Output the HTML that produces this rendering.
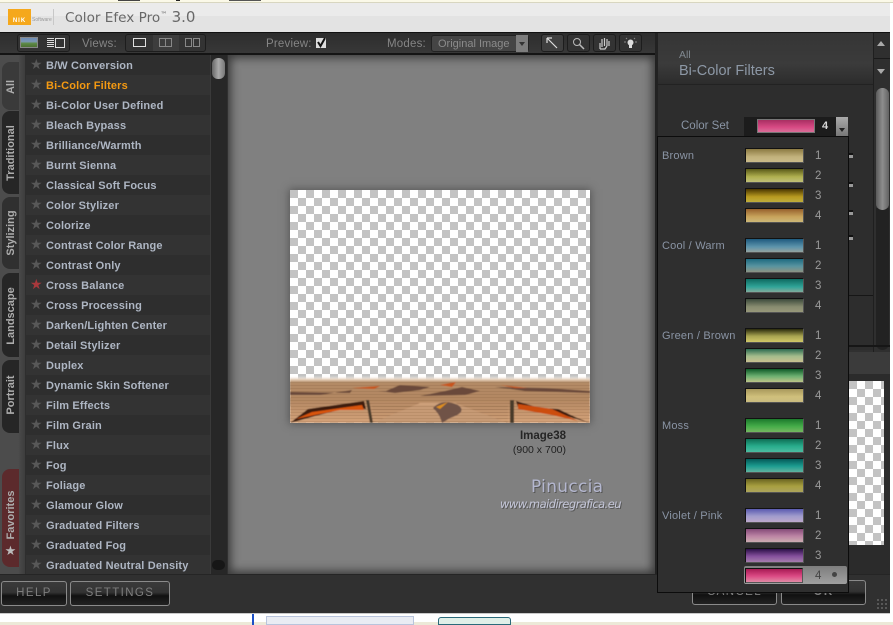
<!DOCTYPE html>
<html><head><meta charset="utf-8"><style>
html,body{margin:0;padding:0;width:893px;height:625px;overflow:hidden;background:#fff}
*{box-sizing:border-box}
body{position:relative;font-family:"Liberation Sans",sans-serif}
.a{position:absolute}
.r{position:absolute;left:26px;width:184px;height:20px;font:bold 11px/22px "Liberation Sans",sans-serif;color:#aeb6c3;padding-left:20px;white-space:nowrap;letter-spacing:.15px}
.r.o{background:#2e2e2e}.r.e{background:#333}
.r i{position:absolute;left:4px;top:0;font:normal 14px/21px "DejaVu Sans",sans-serif;color:#585858;letter-spacing:0}
.t{position:absolute;left:2px;width:17px;background:#262626;border-radius:8px 0 0 8px}
.t b{position:absolute;left:9px;transform:translate(-50%,-50%) rotate(-90deg);font:bold 11px "Liberation Sans",sans-serif;color:#adadad;white-space:nowrap}
.g{position:absolute;left:662px;margin-top:1px;font:11px/14px "Liberation Sans",sans-serif;color:#8a94a4;letter-spacing:.2px;white-space:nowrap}
.s{position:absolute;left:745px;width:59px;height:15px;border:1px solid #111;border-bottom-color:#555;border-right-color:#555}
.n{position:absolute;left:815px;margin-top:1px;font:11.5px/14px "Liberation Sans",sans-serif;color:#9a9a9a}
.btn{position:absolute;height:25px;border:1px solid #8a8a8a;border-radius:3px;background:linear-gradient(#3a3a3a 0,#333 45%,#111 60%,#222 100%);text-align:center;font:11.5px/23px "Liberation Sans",sans-serif;letter-spacing:1.4px;color:#7e7e7e}
.tb{position:absolute;top:34px;height:18px;background:#333;border:1px solid #1d1d1d;border-radius:3px}
.lb{position:absolute;margin-top:1px;font:11.5px/14px "Liberation Sans",sans-serif;color:#858585;white-space:nowrap;letter-spacing:.2px}
.m{position:absolute;left:849px;width:4px;height:5px;background:#999;border-top:2px solid #111}
</style></head><body>
<div class="a" style="left:0;top:0;width:893px;height:2px;background:#fbf9e8"></div>
<div class="a" style="left:118px;top:0;width:22px;height:1px;background:#444"></div>
<div class="a" style="left:176px;top:0;width:4px;height:1px;background:#222"></div>
<div class="a" style="left:229px;top:0;width:32px;height:1px;background:#555"></div>
<div class="a" style="left:0;top:2px;width:893px;height:1px;background:#d8d6c0"></div>
<div class="a" style="left:0;top:3px;width:890px;height:13px;background:#ebebeb"></div>
<div class="a" style="left:0;top:16px;width:890px;height:16px;background:#e3e3e3"></div>
<div class="a" style="left:890px;top:3px;width:3px;height:622px;background:#fff"></div>
<div class="a" style="left:8px;top:9px;width:23px;height:16px;background:#f5a81c"></div>
<div class="a" style="left:8px;top:18px;width:23px;font:bold 6px/6px 'Liberation Sans',sans-serif;color:#fff;text-align:center;letter-spacing:1px">NIK</div>
<div class="a" style="left:32px;top:17px;font:5px/6px 'Liberation Sans',sans-serif;color:#999">Software</div>
<div class="a" style="left:53px;top:9px;width:1px;height:16px;background:#c8c8c8"></div>
<div class="a" style="left:65px;top:8px;font:13.6px/18px 'DejaVu Sans',sans-serif;color:#686868;white-space:nowrap">Color Efex Pro<sup style="font-size:7px;line-height:0">™</sup> <span style="font-size:15px">3.0</span></div>

<div class="a" style="left:0;top:32px;width:890px;height:581px;background:#303030;border-top:1px solid #111"></div>
<div class="a" style="left:0;top:33px;width:660px;height:21px;background:linear-gradient(#2d2d2d,#383838)"></div>
<div class="a" style="left:0;top:53px;width:660px;height:2px;background:#141414"></div>

<div class="tb" style="left:17px;width:53px"></div>
<div class="a" style="left:20px;top:37px;width:18px;height:11px;border:1px solid #888;background:linear-gradient(#6d8bb3 0,#7c98b5 40%,#5d8a45 60%,#4d7035 100%)"></div>
<div class="a" style="left:47px;top:38px;width:7px;height:10px;background:repeating-linear-gradient(#ddd 0,#ddd 1px,transparent 1px,transparent 2px)"></div>
<div class="a" style="left:55px;top:38px;width:10px;height:10px;border:1px solid #ddd"></div>
<div class="lb" style="left:82px;top:36px">Views:</div>
<div class="tb" style="left:125px;width:81px"></div>
<div class="a" style="left:133px;top:38px;width:13px;height:9px;border:1px solid #e0e0e0"></div>
<div class="a" style="left:153px;top:35px;width:26px;height:16px;background:#3d3d3d"></div>
<div class="a" style="left:159px;top:38px;width:13px;height:9px;border:1px solid #888"></div>
<div class="a" style="left:165px;top:38px;width:1px;height:9px;background:#888"></div>
<div class="a" style="left:185px;top:38px;width:7px;height:9px;border:1px solid #888"></div>
<div class="a" style="left:193px;top:38px;width:7px;height:9px;border:1px solid #888"></div>

<div class="lb" style="left:266px;top:36px">Preview:</div>
<div class="a" style="left:316px;top:38px;width:10px;height:10px;background:#ddd"></div>
<svg class="a" style="left:315px;top:36px" width="13" height="13"><path d="M3 6 L5.5 10 L10 2" stroke="#111" stroke-width="2" fill="none"/></svg>
<div class="lb" style="left:387px;top:36px">Modes:</div>
<div class="a" style="left:431px;top:35px;width:98px;height:17px;background:#454545;border:1px solid #222;border-radius:3px;font:11px/16px 'Liberation Sans',sans-serif;color:#8b8b8b;padding-left:6px;white-space:nowrap">Original Image</div>
<div class="a" style="left:516px;top:35px;width:12px;height:17px;background:#7d7d7d"></div>
<div class="a" style="left:519px;top:42px;width:0;height:0;border:3px solid transparent;border-top:4px solid #333"></div>
<div class="tb" style="left:541px;width:23px;background:#3f3f3f"></div>
<svg class="a" style="left:545px;top:37px" width="15" height="13"><path d="M2 1 H7 M2 1 V6 M2 1 L12 11" stroke="#ddd" stroke-width="1.2" fill="none"/></svg>
<div class="tb" style="left:567px;width:23px"></div>
<svg class="a" style="left:571px;top:37px" width="15" height="13"><circle cx="6" cy="5" r="3.5" stroke="#bbb" fill="none"/><path d="M8.5 7.5 L13 12" stroke="#bbb" stroke-width="1.5"/></svg>
<div class="tb" style="left:593px;width:23px"></div>
<svg class="a" style="left:596px;top:36px" width="16" height="15"><path d="M4 13 V7 M6 11 V3 M8.5 10 V2 M11 10 V3 M13 10 V5 M4 13 H9 L11 10" stroke="#ccc" stroke-width="1.2" fill="none"/></svg>
<div class="tb" style="left:619px;width:23px"></div>
<svg class="a" style="left:622px;top:36px" width="17" height="15"><circle cx="8.5" cy="6.5" r="3" fill="#ddd"/><rect x="7" y="9" width="3" height="3" fill="#ddd"/><path d="M2 6 H4 M13 6 H15 M4 2 L5 3 M13 2 L12 3" stroke="#888"/></svg>

<!-- left tabs -->
<div class="a" style="left:0;top:55px;width:26px;height:519px;background:linear-gradient(90deg,#4c4c4c 0,#4c4c4c 70%,#3a3a3a 100%)"></div>
<div class="t" style="top:62px;height:48px;background:#3a3a3a"><b style="top:25px">All</b></div>
<div class="t" style="top:111px;height:83px"><b style="top:42px">Traditional</b></div>
<div class="t" style="top:197px;height:72px;background:#303030"><b style="top:36px">Stylizing</b></div>
<div class="t" style="top:273px;height:84px"><b style="top:43px">Landscape</b></div>
<div class="t" style="top:360px;height:73px"><b style="top:35px">Portrait</b></div>
<div class="t" style="top:469px;height:98px;background:#5c2a2c"><b style="top:46px">Favorites</b></div>
<div class="a" style="left:2px;top:543px;width:17px;text-align:center;font:13px/18px 'DejaVu Sans',sans-serif;color:#bbb">★</div>

<!-- list -->
<div class="a" style="left:25px;top:55px;width:186px;height:519px;background:#2e2e2e"></div>
<div class="r o" style="top:55px"><i>★</i>B/W Conversion</div>
<div class="r e" style="top:75px;color:#f59a12"><i>★</i>Bi-Color Filters</div>
<div class="r o" style="top:95px"><i>★</i>Bi-Color User Defined</div>
<div class="r e" style="top:115px"><i>★</i>Bleach Bypass</div>
<div class="r o" style="top:135px"><i>★</i>Brilliance/Warmth</div>
<div class="r e" style="top:155px"><i>★</i>Burnt Sienna</div>
<div class="r o" style="top:175px"><i>★</i>Classical Soft Focus</div>
<div class="r e" style="top:195px"><i>★</i>Color Stylizer</div>
<div class="r o" style="top:215px"><i>★</i>Colorize</div>
<div class="r e" style="top:235px"><i>★</i>Contrast Color Range</div>
<div class="r o" style="top:255px"><i>★</i>Contrast Only</div>
<div class="r e" style="top:275px"><i style="color:#a8383c">★</i>Cross Balance</div>
<div class="r o" style="top:295px"><i>★</i>Cross Processing</div>
<div class="r e" style="top:315px"><i>★</i>Darken/Lighten Center</div>
<div class="r o" style="top:335px"><i>★</i>Detail Stylizer</div>
<div class="r e" style="top:355px"><i>★</i>Duplex</div>
<div class="r o" style="top:375px"><i>★</i>Dynamic Skin Softener</div>
<div class="r e" style="top:395px"><i>★</i>Film Effects</div>
<div class="r o" style="top:415px"><i>★</i>Film Grain</div>
<div class="r e" style="top:435px"><i>★</i>Flux</div>
<div class="r o" style="top:455px"><i>★</i>Fog</div>
<div class="r e" style="top:475px"><i>★</i>Foliage</div>
<div class="r o" style="top:495px"><i>★</i>Glamour Glow</div>
<div class="r e" style="top:515px"><i>★</i>Graduated Filters</div>
<div class="r o" style="top:535px"><i>★</i>Graduated Fog</div>
<div class="r e" style="top:555px;height:19px"><i>★</i>Graduated Neutral Density</div>

<!-- list scrollbar -->
<div class="a" style="left:210px;top:55px;width:17px;height:519px;background:#272727;border-left:1px solid #3a3a3a"></div>
<div class="a" style="left:212px;top:58px;width:13px;height:21px;border-radius:6px;background:linear-gradient(90deg,#666,#aaa 50%,#777)"></div>
<div class="a" style="left:212px;top:560px;width:13px;height:10px;border-radius:6px;background:#161616"></div>

<!-- preview -->
<div class="a" style="left:228px;top:55px;width:427px;height:519px;background:#808080;box-shadow:inset 0 0 9px 3px #3a3a3a"></div>
<div class="a" style="left:290px;top:190px;width:300px;height:233px;background-color:#fff;background-image:linear-gradient(45deg,#c3c3c3 25%,transparent 25%,transparent 75%,#c3c3c3 75%),linear-gradient(45deg,#c3c3c3 25%,transparent 25%,transparent 75%,#c3c3c3 75%);background-size:16px 16px;background-position:0 8px,8px 16px;box-shadow:0 0 8px 1px #555"></div>
<svg class="a" style="left:290px;top:376px" width="300" height="47">
<defs>
<linearGradient id="tg" x1="0" y1="0" x2="0" y2="1"><stop offset="0" stop-color="#fff" stop-opacity="0"/><stop offset=".07" stop-color="#e8d4c0"/><stop offset=".14" stop-color="#b8906a"/><stop offset=".5" stop-color="#b88c66"/><stop offset="1" stop-color="#dcaa80"/></linearGradient>
<pattern id="st" width="5" height="3" patternUnits="userSpaceOnUse"><rect width="5" height="1" fill="#6a4428" opacity=".35"/></pattern>
<filter id="bl"><feGaussianBlur stdDeviation=".5"/></filter>
</defs>
<g filter="url(#bl)">
<rect width="300" height="47" fill="url(#tg)"/>
<rect y="5" width="300" height="42" fill="url(#st)"/>
<path d="M0 16 L60 17 L62 14 L30 19 L0 19Z M88 15 H96 L110 9 L140 11 L130 14 L105 17Z M155 15 L172 11 L190 15 L175 19 L130 20Z M205 11 L235 15 L300 17 V15 L255 12Z" fill="#6a4a3a"/>
<path d="M62 12 L90 10 L84 13Z M150 9 L166 6 L162 11Z M210 9 L238 12 L225 12Z" fill="#c8541a"/>
<path d="M0 47 L18 33 L74 25 L76 33 L60 31 L25 40Z" fill="#3e1c0e"/>
<path d="M6 43 L22 36 L72 29 L74 34 L50 34 L25 39Z" fill="#d9540f"/>
<path d="M226 25 L300 47 L285 41 L268 33 L228 31Z" fill="#3c1a0c"/>
<path d="M228 28 L262 33 L288 45 L262 39 L228 33Z" fill="#cc4e10"/>
<path d="M76 24 L80 47 H83 L79 24Z M220 24 V47 H224 V24Z" fill="#4a3a2c"/>
<path d="M82 47 L130 27 L165 27 L218 47Z" fill="#cda07a"/>
<rect x="82" y="28" width="136" height="19" fill="url(#st)"/>
<path d="M143 32 Q152 22 168 29 Q178 36 160 42 L152 47 Q150 38 143 32Z" fill="#6f5347"/>
<path d="M146 31 L158 26 L150 33Z" fill="#e0901a"/>
</g>
</svg>
<div class="a" style="left:490px;top:429px;width:76px;text-align:right;font:bold 11.5px/14px 'Liberation Sans',sans-serif;color:#252525">Image38</div>
<div class="a" style="left:490px;top:444px;width:76px;text-align:right;font:10.5px/13px 'Liberation Sans',sans-serif;color:#222">(900 x 700)</div>
<div class="a" style="left:531px;top:476px;font:17px/22px 'DejaVu Sans',sans-serif;color:#b4b7cf;letter-spacing:.3px;text-shadow:1px 1px 0 #555">Pinuccia</div>
<div class="a" style="left:500px;top:497px;font:11.5px/14px 'DejaVu Sans',sans-serif;font-style:italic;color:#c4c6d8;letter-spacing:-.55px;white-space:nowrap;text-shadow:1px 1px 0 #555">www.maidiregrafica.eu</div>

<!-- right panel -->
<div class="a" style="left:655px;top:33px;width:5px;height:541px;background:#222"></div>
<div class="a" style="left:658px;top:33px;width:215px;height:52px;background:linear-gradient(#353535,#3b3b3b 60%,#2c2c2c);border-bottom:1px solid #222"></div>
<div class="a" style="left:679px;top:49px;font:10.5px/13px 'Liberation Sans',sans-serif;color:#808890">All</div>
<div class="a" style="left:679px;top:62px;font:14.5px/18px 'Liberation Sans',sans-serif;color:#8d98a6;white-space:nowrap">Bi-Color Filters</div>
<div class="a" style="left:658px;top:85px;width:215px;height:265px;background:#2d2d2d"></div>
<div class="a" style="left:681px;top:119px;font:11.5px/14px 'Liberation Sans',sans-serif;color:#8a95a5;white-space:nowrap">Color Set</div>
<div class="a" style="left:744px;top:117px;width:104px;height:19px;background:#1c1c1c"></div>
<div class="a" style="left:757px;top:119px;width:58px;height:14px;border:1px solid #777;background:linear-gradient(#a82f62,#d84a84 60%,#d96f98)"></div>
<div class="a" style="left:822px;top:119px;font:bold 11px/14px 'Liberation Sans',sans-serif;color:#d8d8d8">4</div>
<div class="a" style="left:836px;top:117px;width:12px;height:19px;background:linear-gradient(#aaa,#777)"></div>
<div class="a" style="left:839px;top:128px;width:0;height:0;border:3px solid transparent;border-top:4px solid #222"></div>
<div class="m" style="top:153px"></div><div class="m" style="top:182px"></div><div class="m" style="top:210px"></div><div class="m" style="top:235px"></div>
<div class="a" style="left:873px;top:33px;width:17px;height:322px;background:#2f2f2f;border-left:1px solid #1f1f1f"></div>
<div class="a" style="left:874px;top:58px;width:16px;height:1px;background:#1a1a1a"></div>
<div class="a" style="left:877px;top:41px;width:0;height:0;border:4px solid transparent;border-bottom:5px solid #aaa;border-top:0"></div>
<div class="a" style="left:877px;top:69px;width:0;height:0;border:4px solid transparent;border-top:5px solid #aaa;border-bottom:0"></div>
<div class="a" style="left:876px;top:88px;width:13px;height:122px;border-radius:7px;background:linear-gradient(90deg,#5a5a5a,#8e8e8e 50%,#626262)"></div>
<div class="a" style="left:876px;top:208px;width:13px;height:142px;border-radius:0 0 7px 7px;background:#222;z-index:0"></div>
<div class="a" style="left:876px;top:88px;width:13px;height:122px;border-radius:7px;background:linear-gradient(90deg,#5a5a5a,#8e8e8e 50%,#626262)"></div>
<div class="a" style="left:848px;top:295px;width:25px;height:1px;background:#161616"></div>
<div class="a" style="left:848px;top:345px;width:42px;height:2px;background:#161616"></div>
<div class="a" style="left:848px;top:352px;width:42px;height:22px;background:#3b3b3b"></div>
<div class="a" style="left:848px;top:374px;width:42px;height:200px;background:#2b2b2b"></div>
<div class="a" style="left:849px;top:381px;width:35px;height:164px;background-color:#fff;background-image:linear-gradient(45deg,#c3c3c3 25%,transparent 25%,transparent 75%,#c3c3c3 75%),linear-gradient(45deg,#c3c3c3 25%,transparent 25%,transparent 75%,#c3c3c3 75%);background-size:16px 16px;background-position:0 8px,8px 16px"></div>

<!-- bottom bar -->
<div class="a" style="left:0;top:574px;width:890px;height:39px;background:#303030;border-top:1px solid #252525"></div>
<div class="btn" style="left:1px;top:581px;width:66px">HELP</div>
<div class="btn" style="left:70px;top:581px;width:100px">SETTINGS</div>
<div class="btn" style="left:692px;top:580px;width:85px">CANCEL</div>
<div class="btn" style="left:781px;top:580px;width:85px;font-weight:bold">OK</div>
<div class="a" style="left:876px;top:598px;width:12px;height:12px;background-image:radial-gradient(#666 1px,transparent 1px);background-size:4px 4px"></div>
<div class="a" style="left:0;top:613px;width:890px;height:1px;background:#c9c9c9"></div>
<div class="a" style="left:0;top:614px;width:893px;height:8px;background:#fff"></div>
<div class="a" style="left:0;top:622px;width:893px;height:3px;background:#ece9d8"></div>
<div class="a" style="left:252px;top:614px;width:2px;height:11px;background:#1b4fc6"></div>
<div class="a" style="left:266px;top:616px;width:148px;height:9px;background:#e9ecf3;border:1px solid #b8c4dc"></div>
<div class="a" style="left:438px;top:617px;width:73px;height:8px;background:#e0efe8;border:1px solid #2a6a7a;border-radius:3px 3px 0 0"></div>

<!-- dropdown -->
<div class="a" style="left:657px;top:136px;width:192px;height:457px;background:#2f2f2f;border:1px solid #0c0c0c"></div>
<div class="g" style="top:148px">Brown</div>
<div class="s" style="top:148px;background:linear-gradient(#8c7a42,#c2b27c 60%,#cabb8a)"></div><div class="n" style="top:148px">1</div>
<div class="s" style="top:168px;background:linear-gradient(#5a5a18,#b0b050 60%,#c0c078)"></div><div class="n" style="top:168px">2</div>
<div class="s" style="top:188px;background:linear-gradient(#4a3600,#b89a20 60%,#bfae3c)"></div><div class="n" style="top:188px">3</div>
<div class="s" style="top:208px;background:linear-gradient(#96602c,#c8a45c 60%,#ccb878)"></div><div class="n" style="top:208px">4</div>
<div class="g" style="top:238px">Cool / Warm</div>
<div class="s" style="top:238px;background:linear-gradient(#1e5a7e,#5c94ac 60%,#94a4a0)"></div><div class="n" style="top:238px">1</div>
<div class="s" style="top:258px;background:linear-gradient(#1e6a80,#5894a0 55%,#8c9484)"></div><div class="n" style="top:258px">2</div>
<div class="s" style="top:278px;background:linear-gradient(#0e6a60,#30a498 60%,#80ac9c)"></div><div class="n" style="top:278px">3</div>
<div class="s" style="top:298px;background:linear-gradient(#3c4a3c,#888c70 60%,#98987a)"></div><div class="n" style="top:298px">4</div>
<div class="g" style="top:328px">Green / Brown</div>
<div class="s" style="top:328px;background:linear-gradient(#2a2a0c,#a8a450 55%,#d0c868)"></div><div class="n" style="top:328px">1</div>
<div class="s" style="top:348px;background:linear-gradient(#2a6a50,#a4bc8c 55%,#c8c090)"></div><div class="n" style="top:348px">2</div>
<div class="s" style="top:368px;background:linear-gradient(#0e5a28,#6cb070 55%,#bcc488)"></div><div class="n" style="top:368px">3</div>
<div class="s" style="top:388px;background:linear-gradient(#a8985c,#d0c07c 60%,#cabc80)"></div><div class="n" style="top:388px">4</div>
<div class="g" style="top:418px">Moss</div>
<div class="s" style="top:418px;background:linear-gradient(#1c7a2c,#44ac48 55%,#74b860)"></div><div class="n" style="top:418px">1</div>
<div class="s" style="top:438px;background:linear-gradient(#0e6e54,#28ac8c 55%,#4cbca0)"></div><div class="n" style="top:438px">2</div>
<div class="s" style="top:458px;background:linear-gradient(#045a58,#1c9c90 55%,#60b4a0)"></div><div class="n" style="top:458px">3</div>
<div class="s" style="top:478px;background:linear-gradient(#6a6420,#a8a040 55%,#aca45c)"></div><div class="n" style="top:478px">4</div>
<div class="g" style="top:508px">Violet / Pink</div>
<div class="s" style="top:508px;background:linear-gradient(#5a5ab0,#a09ccc 55%,#bca8cc)"></div><div class="n" style="top:508px">1</div>
<div class="s" style="top:528px;background:linear-gradient(#844a78,#bc84a4 55%,#ccacb0)"></div><div class="n" style="top:528px">2</div>
<div class="s" style="top:548px;background:linear-gradient(#2c1048,#84509c 55%,#a47cac)"></div><div class="n" style="top:548px">3</div>
<div class="a" style="left:744px;top:566px;width:103px;height:18px;background:linear-gradient(#7e7e7e,#a0a0a0);border-radius:2px"></div>
<div class="s" style="top:568px;width:58px;background:linear-gradient(#a81a54,#dc4a84 55%,#e08aa4)"></div><div class="n" style="top:568px;color:#444">4</div>
<div class="a" style="left:832px;top:572px;width:5px;height:5px;border-radius:50%;background:#444"></div>
</body></html>
